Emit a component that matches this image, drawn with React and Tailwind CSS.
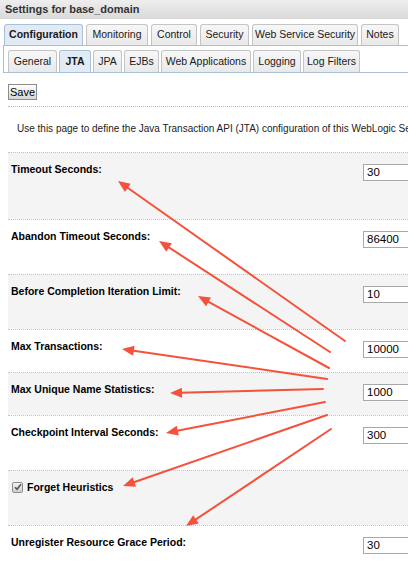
import React from 'react';

const mainTabs = [
  { label: 'Configuration', w: 'w-[79px]', active: true },
  { label: 'Monitoring', w: 'w-[62px]' },
  { label: 'Control', w: 'w-[46px]' },
  { label: 'Security', w: 'w-[49px]' },
  { label: 'Web Service Security', w: 'w-[106px]' },
  { label: 'Notes', w: 'w-[38px]' },
];

const subTabs = [
  { label: 'General', w: 'w-[49px]' },
  { label: 'JTA', w: 'w-[32px]', active: true },
  { label: 'JPA', w: 'w-[29px]' },
  { label: 'EJBs', w: 'w-[35px]' },
  { label: 'Web Applications', w: 'w-[90px]' },
  { label: 'Logging', w: 'w-[48px]' },
  { label: 'Log Filters', w: 'w-[57px]' },
];

const rows = [
  { label: 'Timeout Seconds:', value: '30', h: 'h-[67px]', shade: true },
  { label: 'Abandon Timeout Seconds:', value: '86400', h: 'h-[55px]' },
  { label: 'Before Completion Iteration Limit:', value: '10', h: 'h-[55px]', shade: true },
  { label: 'Max Transactions:', value: '10000', h: 'h-[43px]' },
  { label: 'Max Unique Name Statistics:', value: '1000', h: 'h-[43px]', shade: true },
  { label: 'Checkpoint Interval Seconds:', value: '300', h: 'h-[55px]' },
  { label: 'Forget Heuristics', check: true, h: 'h-[55px]', shade: true },
  { label: 'Unregister Resource Grace Period:', value: '30', h: 'h-[60px]' },
];

// annotation arrows: [tailX, tailY, tipX, tipY]
const arrows = [
  [345, 341, 118, 181],
  [330, 352, 159, 241],
  [329, 368, 198, 296],
  [327, 379, 122, 349],
  [323, 389, 170, 393],
  [325, 402, 166, 433],
  [327, 415, 123, 486],
  [331, 429, 186, 526],
];

const Arrow = ({ a }) => {
  const [x1, y1, x2, y2] = a;
  const dx = x2 - x1;
  const dy = y2 - y1;
  const len = Math.sqrt(dx * dx + dy * dy);
  const ux = dx / len;
  const uy = dy / len;
  const hl = 12;
  const hw = 5;
  const bx = x2 - ux * hl;
  const by = y2 - uy * hl;
  const pts = `${x2},${y2} ${bx - uy * hw},${by + ux * hw} ${bx + uy * hw},${by - ux * hw}`;
  return (
    <g>
      <line x1={x1} y1={y1} x2={bx + ux * 2} y2={by + uy * 2} stroke="#f5513b" strokeWidth="2" strokeLinecap="round" />
      <polygon points={pts} fill="#f5513b" />
    </g>
  );
};

const Tab = ({ label, w, active }) => (
  <div
    className={`${w} h-full flex items-center justify-center border border-b-0 rounded-t-[3px] ${
      active
        ? 'bg-[#e2ebf4] border-[#a9c1d8] font-bold'
        : 'bg-gradient-to-b from-[#f7f7f7] to-[#e9e9e9] border-[#c4c4c4]'
    }`}
  >
    {label}
  </div>
);

export default function App() {
  return (
    <div className="relative w-full h-[582px] overflow-hidden bg-white text-[#1a1a1a] font-['Liberation_Sans',Arial,sans-serif] text-[10.5px]">
      <div className="h-[19px] bg-gradient-to-b from-[#eeeeee] to-[#d9d9d9] flex items-center px-[5px] text-[11px] font-bold text-[#333]">
        Settings for base_domain
      </div>

      <div className="mt-[5px] h-[21px] flex gap-[3px] pl-[4px]">
        {mainTabs.map((t) => (
          <Tab key={t.label} {...t} />
        ))}
      </div>

      <div className="ml-[3px] h-[28px] border-t border-l border-b border-[#a9c1d8] flex items-end pl-[4px]">
        <div className="flex gap-[2px] h-[22px]">
          {subTabs.map((t) => (
            <Tab key={t.label} {...t} />
          ))}
        </div>
      </div>

      <div className="mt-[11px] ml-[8px]">
        <button className="h-[16px] w-[29px] border border-[#8c8c8c] bg-gradient-to-b from-white to-[#d6d6d6] text-[11px] leading-none text-black">
          Save
        </button>
      </div>

      <div className="mt-[6px] ml-[8px] border-t border-dotted border-[#bdbdbd]" />

      <div className="mt-[15px] pl-[17px] whitespace-nowrap text-[10px] leading-[13px] text-[#222]">
        Use this page to define the Java Transaction API (JTA) configuration of this WebLogic Server domain.
      </div>

      <div className="mt-[17px] ml-[8px]">
        {rows.map((r) => (
          <div
            key={r.label}
            className={`${r.h} border-t border-dotted border-[#c4c4c4] grid grid-cols-[355px_1fr] ${
              r.shade ? 'bg-[#f4f4f4]' : 'bg-white'
            }`}
          >
            <div className="pt-[9px] pl-[3px] leading-[14px] font-bold text-[10.5px] text-black">
              {r.check ? (
                <span className="flex items-center gap-[4px] pl-[1px]">
                  <span className="w-[11px] h-[11px] rounded-[2px] border border-[#8d8d8d] bg-gradient-to-b from-[#f4f4f4] to-[#cfcfcf] flex items-center justify-center">
                    <svg width="8" height="8" viewBox="0 0 8 8">
                      <path d="M1 4.2 L3 6.3 L7 1.2" fill="none" stroke="#555" strokeWidth="1.6" />
                    </svg>
                  </span>
                  {r.label}
                </span>
              ) : (
                r.label
              )}
            </div>
            <div className="pt-[11px]">
              {!r.check && (
                <div className="h-[17px] w-[70px] border border-[#a8a8a8] bg-white px-[3px] flex items-center text-[11.5px] text-black">
                  {r.value}
                </div>
              )}
            </div>
          </div>
        ))}
      </div>

      <svg className="absolute inset-0 pointer-events-none" width="408" height="582">
        {arrows.map((a, i) => (
          <Arrow key={i} a={a} />
        ))}
      </svg>
    </div>
  );
}
